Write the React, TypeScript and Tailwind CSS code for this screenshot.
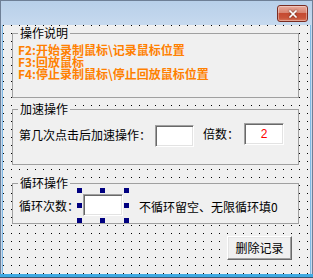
import { X } from "lucide-react";

const font = "font-['Noto_Sans_CJK_SC','Noto_Sans',sans-serif]";

function Sunken({ className = "", children }: { className?: string; children?: React.ReactNode }) {
	return (
		<div
			className={`h-[22px] bg-white border border-t-[#a0a0a0] border-l-[#a0a0a0] border-r-white border-b-white shadow-[inset_1px_1px_0_#696969,inset_-1px_-1px_0_#e3e3e3] flex items-center justify-center ${className}`}
		>
			{children}
		</div>
	);
}

function Handle({ className }: { className: string }) {
	return <div className={`absolute w-[5px] h-[5px] bg-[#000080] ${className}`} />;
}

export default function App() {
	return (
		<div
			className={`w-[313px] h-[278px] flex flex-col bg-[linear-gradient(#b7cfe9,#c6d9ee_25px,#c6d9ee)] shadow-[inset_0_0_0_1px_#6e7f96] text-[12px] leading-[12px] text-black ${font}`}
		>
			{/* title bar */}
			<div className="h-[25px] flex justify-end pt-[5px] pr-[5px]">
				<div className="w-[31px] h-[17px] rounded-[3px] border border-[#7a2c22] bg-[linear-gradient(#e8a99b,#d88471_45%,#c54a31_50%,#c9543a_80%,#d9785c)] shadow-[inset_0_0_0_1px_rgba(255,255,255,0.35)] flex items-center justify-center">
					<X size={12} strokeWidth={3.5} className="text-white drop-shadow-[0_0_1px_#5a2a20]" />
				</div>
			</div>

			<div className="flex flex-1">
				<div className="w-[3px] border-r border-[#7fb9e4]" />

				{/* form client area with designer grid */}
				<div className="w-[307px] h-[249px] bg-[#f0f0f0] bg-[image:conic-gradient(from_270deg_at_1px_1px,#000_90deg,transparent_0)] bg-[length:8px_8px] flex flex-col pl-[9px] pr-[11px] pt-[2px]">
					<fieldset className="h-[71px] border border-[#a0a0a0] bg-[#f0f0f0] px-0">
						<legend className="ml-[5px] px-[2px] bg-[#f0f0f0]">操作说明</legend>
						<div className="pl-[5px] pt-[5px] text-[#ff8000] font-bold leading-[12px]">
							<div>F2:开始录制鼠标\记录鼠标位置</div>
							<div>F3:回放鼠标</div>
							<div>F4:停止录制鼠标\停止回放鼠标位置</div>
						</div>
					</fieldset>

					<fieldset className="mt-[5px] h-[62px] border border-[#a0a0a0] bg-[#f0f0f0] px-0">
						<legend className="ml-[5px] px-[2px] bg-[#f0f0f0]">加速操作</legend>
						<div className="flex items-start pl-[6px] pt-[8px]">
							<span className="w-[136px] mt-[6px]">第几次点击后加速操作：</span>
							<Sunken className="w-[39px] mt-[2px]" />
							<span className="ml-[9px] w-[41px] mt-[5px]">倍数：</span>
							<Sunken className="w-[40px]">
								<span className="text-[#ff0000] font-['Liberation_Sans',sans-serif]">2</span>
							</Sunken>
						</div>
					</fieldset>

					<fieldset className="mt-[12px] h-[47px] border border-[#a0a0a0] bg-[#f0f0f0] px-0">
						<legend className="ml-[5px] px-[2px] bg-[#f0f0f0]">循环操作</legend>
						<div className="flex items-start pl-[6px] pt-[5px]">
							<span className="w-[64px] mt-[6px]">循环次数：</span>
							<div className="relative">
								<Sunken className="w-[40px]" />
								<Handle className="-left-[6px] -top-[6px]" />
								<Handle className="left-[17px] -top-[6px]" />
								<Handle className="left-[41px] -top-[6px]" />
								<Handle className="-left-[6px] top-[9px]" />
								<Handle className="left-[41px] top-[9px]" />
								<Handle className="-left-[6px] top-[24px]" />
								<Handle className="left-[17px] top-[24px]" />
								<Handle className="left-[41px] top-[24px]" />
							</div>
							<span className="ml-[16px] mt-[7px]">不循环留空、无限循环填0</span>
						</div>
					</fieldset>

					<div className="flex justify-end mt-[12px] pr-[7px]">
						<button className="w-[65px] h-[24px] bg-[#f0f0f0] border border-t-white border-l-white border-r-[#696969] border-b-[#696969] shadow-[inset_-1px_-1px_0_#a0a0a0,inset_1px_1px_0_#e3e3e3] text-[12px]">
							删除记录
						</button>
					</div>
				</div>

				<div className="w-[3px] border-l border-[#7fb9e4]" />
			</div>

			<div className="h-[4px] bg-[#3fa9e2] border-b border-[#3a5570]" />
		</div>
	);
}
